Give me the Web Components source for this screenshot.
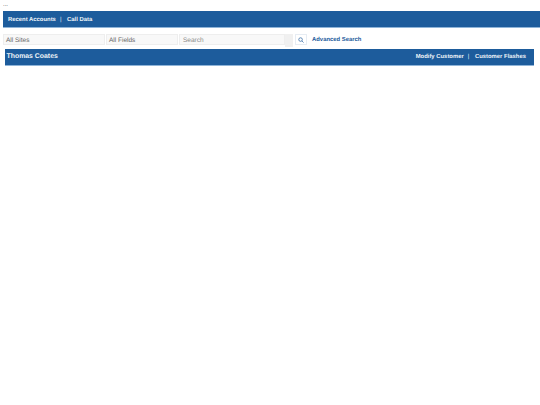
<!DOCTYPE html>
<html>
<head>
<meta charset="utf-8">
<title>Customer</title>
<style>
  html, body { margin: 0; padding: 0; background: #fff; }
  body { font-family: "Liberation Sans", Arial, sans-serif; width: 540px; height: 405px; overflow: hidden; text-rendering: geometricPrecision; }
</style>
</head>
<body>
<app-page>
  <app-bar slot="top" style="margin-left:3px;height:15px;padding-top:1px;padding-left:5px">
    <app-link>Recent Accounts</app-link>
    <app-link sep>Call Data</app-link>
  </app-bar>
  <app-search slot="search"></app-search>
  <app-bar slot="customer" style="margin:0 6px 0 5px;height:16px;padding-left:1.5px;padding-right:8px">
    <span slot="title">Thomas Coates</span>
    <app-link slot="end">Modify Customer</app-link>
    <app-link slot="end" sep>Customer Flashes</app-link>
  </app-bar>
</app-page>

<script>
// page frame
class AppPage extends HTMLElement {
  constructor() {
    super();
    const root = this.attachShadow({ mode: 'open' });
    root.innerHTML = `
      <style>
        :host { display: block; }
        .dots { height: 11px; padding-left: 3px; font-size: 6px; line-height: 11px; color: #444; }
      </style>
      <div class="dots">...</div>
      <slot name="top"></slot>
      <slot name="search"></slot>
      <slot name="customer"></slot>
    `;
  }
}

// blue bar with links on both sides
class AppBar extends HTMLElement {
  constructor() {
    super();
    const root = this.attachShadow({ mode: 'open' });
    root.innerHTML = `
      <style>
        :host {
          display: flex;
          align-items: center;
          background: #1d5c9c;
          color: #eef3f8;
          font-size: 5.9px;
          font-weight: bold;
          border-bottom: 1px solid #8fb4d8;
        }
        .title { font-size: 6.9px; position: relative; top: -1px; }
        .links, .end { display: flex; align-items: center; }
        .end { margin-left: auto; }
      </style>
      <span class="title"><slot name="title"></slot></span>
      <span class="links"><slot></slot></span>
      <span class="end"><slot name="end"></slot></span>
    `;
  }
}

class AppLink extends HTMLElement {
  constructor() {
    super();
    const root = this.attachShadow({ mode: 'open' });
    root.innerHTML = `
      <style>
        :host { display: inline-block; white-space: nowrap; }
        :host([sep])::before { content: "|"; font-weight: normal; margin: 0 4px; }
      </style>
      <slot></slot>
    `;
  }
}

// search row
class AppSearch extends HTMLElement {
  constructor() {
    super();
    const root = this.attachShadow({ mode: 'open' });
    root.innerHTML = `
      <style>
        :host {
          display: flex;
          align-items: flex-start;
          height: 15px;
          padding: 6px 0 0 3px;
          font-size: 6.5px;
          color: #666;
        }
        .field {
          box-sizing: border-box;
          height: 11px;
          line-height: 11px;
          padding-left: 2px;
          background: #f8f8f8;
          border: 1px solid #eee;
        }
        .sites { width: 101.5px; margin-right: 1.5px; }
        .fields { width: 71.5px; margin-right: 1.5px; }
        .search { width: 106px; padding-left: 3px; color: #888; }
        .gap { width: 8px; height: 13px; background: #f0f0f0; margin-right: 2px; }
        .btn {
          box-sizing: border-box;
          width: 12px;
          height: 11px;
          border: 1px solid #e6ecf3;
          display: flex;
          align-items: center;
          justify-content: center;
          margin-right: 5px;
        }
        .adv { color: #1d5c9c; font-weight: bold; font-size: 5.9px; line-height: 9px; margin-top: 2px; white-space: nowrap; }
      </style>
      <div class="field sites">All Sites</div>
      <div class="field fields">All Fields</div>
      <div class="field search">Search</div>
      <div class="gap"></div>
      <div class="btn">
        <svg width="6" height="6" viewBox="0 0 7 7" fill="none" stroke="#3a6fa6" stroke-width="0.9">
          <circle cx="3" cy="3" r="2.1"/><path d="M4.6 4.6L6.5 6.5"/>
        </svg>
      </div>
      <div class="adv">Advanced Search</div>
    `;
  }
}

customElements.define('app-page', AppPage);
customElements.define('app-bar', AppBar);
customElements.define('app-link', AppLink);
customElements.define('app-search', AppSearch);
</script>
</body>
</html>
